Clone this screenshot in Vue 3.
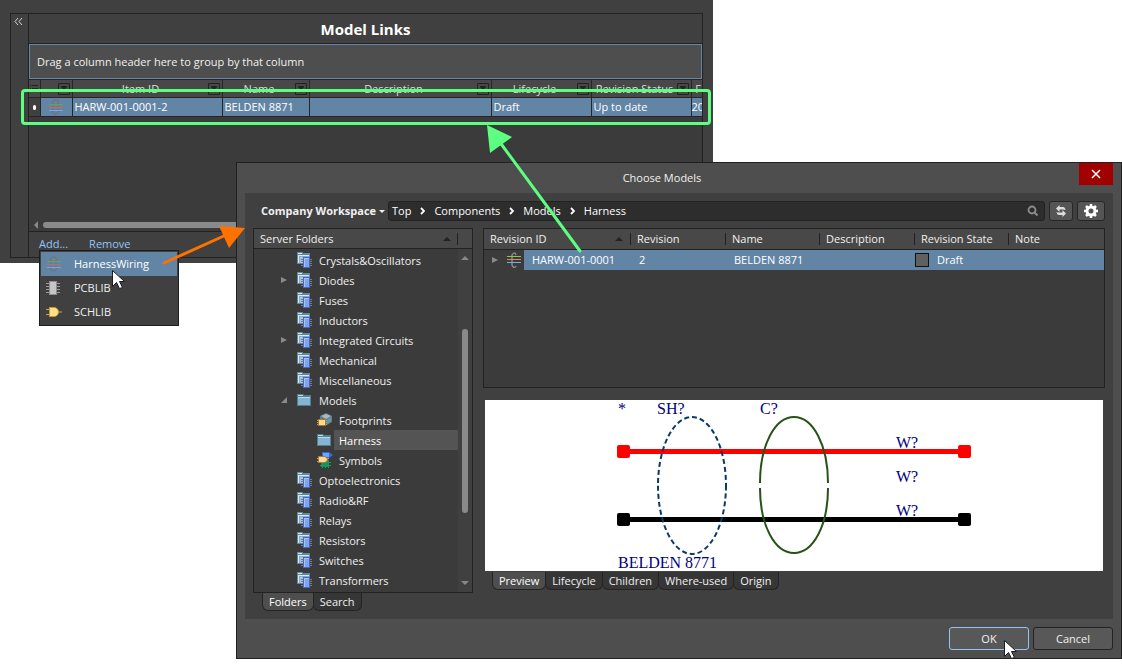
<script setup>
import { ref } from 'vue'

const gridCols = [
  { label: 'Item ID', width: 150, value: 'HARW-001-0001-2' },
  { label: 'Name', width: 87, value: 'BELDEN 8871' },
  { label: 'Description', width: 182, value: '' },
  { label: 'Lifecycle', width: 100, value: 'Draft' },
  { label: 'Revision Status', width: 100, value: 'Up to date' },
]

const menuItems = [
  { label: 'HarnessWiring', icon: 'harness' },
  { label: 'PCBLIB', icon: 'chip' },
  { label: 'SCHLIB', icon: 'gate' },
]

const folders = [
  { name: 'Crystals&Oscillators', icon: 'parts' },
  { name: 'Diodes', icon: 'parts', arrow: 'closed' },
  { name: 'Fuses', icon: 'parts' },
  { name: 'Inductors', icon: 'parts' },
  { name: 'Integrated Circuits', icon: 'parts', arrow: 'closed' },
  { name: 'Mechanical', icon: 'parts' },
  { name: 'Miscellaneous', icon: 'parts' },
  { name: 'Models', icon: 'folder', arrow: 'open' },
  { name: 'Footprints', icon: 'footprint', child: true },
  { name: 'Harness', icon: 'folder', child: true, selected: true },
  { name: 'Symbols', icon: 'symbol', child: true },
  { name: 'Optoelectronics', icon: 'parts' },
  { name: 'Radio&RF', icon: 'parts' },
  { name: 'Relays', icon: 'parts' },
  { name: 'Resistors', icon: 'parts' },
  { name: 'Switches', icon: 'parts' },
  { name: 'Transformers', icon: 'parts' },
]

const crumbs = ['Top', 'Components', 'Models', 'Harness']
const leftTabs = ['Folders', 'Search']
const previewTabs = ['Preview', 'Lifecycle', 'Children', 'Where-used', 'Origin']
const leftTab = ref('Folders')
const previewTab = ref('Preview')
</script>

<template>
  <main class="desktop">
    <svg class="defs" aria-hidden="true">
      <symbol id="i-parts" viewBox="0 0 16 16">
        <path d="M0 0h6v1h7v11H0z" fill="#5f88a3" />
        <path d="M1 1h4v1H1zM1 3h11v1H1zM1 3h1v8H1z" fill="#dcebf2" />
        <path d="M2 4h10v7H2z" fill="#86acc6" />
        <path d="M3 5h8v6H3z" fill="#a9c6da" />
        <path d="M4 7.500h2M4 9.500h2M4 11.500h2M4 13.500h2M13 7.500h2M13 9.500h2M13 11.500h2M13 13.500h2" stroke="#7b7b80" />
        <path d="M6 5h7v11H6z" fill="#4468c8" />
        <path d="M7 6h5v9H7z" fill="#a9c0fb" />
        <path d="M8 7h4v8H8z" fill="#82a4ee" />
      </symbol>
      <symbol id="i-folder" viewBox="0 0 16 16">
        <path d="M0 2h6l1 1h7v11H0z" fill="#4f8193" />
        <path d="M1 3h5v1H1zM1 5h12v1H1z" fill="#b9dbe6" />
        <path d="M1 6h12v7H1z" fill="#86b3d4" />
      </symbol>
      <symbol id="i-footprint" viewBox="0 0 16 16">
        <path d="M3 4l6-3 6 3v6l-5 3-7-3z" fill="#5c7e89" />
        <path d="M4 4l5-2 5 2-5 3z" fill="#a9b6c4" />
        <path d="M10 8l4-3v4l-4 3z" fill="#6e96a2" />
        <path d="M0 8.500h10M0 10.500h10M0 12.500h10" stroke="#c89f55" />
        <path d="M1 7h8v7H1z" fill="#a87930" />
        <path d="M2 8h6v5H2z" fill="#ffd98a" />
      </symbol>
      <symbol id="i-symbol" viewBox="0 0 16 16">
        <path d="M5 0h7l4 3-4 3H5z" fill="#2d6fe0" />
        <path d="M6 1h6v4H6z" fill="#6ba5ff" />
        <path d="M4 9h8v6H4z" fill="#138f5a" />
        <path d="M3 10.500h11M3 13.500h11M5.500 8v8M8.500 8v8M11.500 8v8" stroke="#169a62" />
        <path d="M0 6.500h12M0 9.500h4" stroke="#d5a458" />
        <path d="M1 4h7l3 3v2l-3 2H1z" fill="#aa7c37" />
        <path d="M2 5h6l2 2v1l-2 2H2z" fill="#ffd99a" />
      </symbol>
      <symbol id="i-harness" viewBox="0 0 16 16">
        <path d="M4 4C5 0 10 0 11 4M4 12c1 4 6 4 7 0M5 4v8M10 4v8" fill="none" stroke="#6d7277" stroke-width="1.500" stroke-dasharray="2 1" />
        <path d="M1 5.500h14" stroke="#65a743" />
        <path d="M1 8.500h14" stroke="#df5c62" />
        <path d="M1 11.500h14" stroke="#6da9ea" />
      </symbol>
      <symbol id="i-harness2" viewBox="0 0 16 16">
        <path d="M10 3C9 0 7 1 6 3v10c1 3 3 3 4 1" fill="none" stroke="#888" stroke-width="1.500" />
        <path d="M1 4.500h14" stroke="#79d43c" />
        <path d="M1 7.500h14" stroke="#ed7774" />
        <path d="M1 10.500h14" stroke="#77acec" />
      </symbol>
      <symbol id="i-chip" viewBox="0 0 16 16">
        <path d="M0 3.500h14M0 6.500h14M0 9.500h14M0 12.500h14" stroke="#9a9a9a" />
        <path d="M3 1h8v14H3z" fill="#8f8f8f" />
        <path d="M4 2h6v12H4z" fill="#c6c6c6" />
      </symbol>
      <symbol id="i-gate" viewBox="0 0 16 16">
        <path d="M0 5.500h4M0 10.500h4M11 8h5" stroke="#c9a955" />
        <path d="M3 3h6q4 2 4 5t-4 5H3z" fill="#c39a37" />
        <path d="M4 4h5q3 1 3 4t-3 4H4z" fill="#ffdf86" />
      </symbol>
    </svg>

    <section class="links-window" aria-label="Model Links">
      <div class="links-panel">
        <button class="collapse" aria-label="Collapse">
          <svg width="9" height="9" viewBox="0 0 9 9"><path d="M4 1L1 4.500l3 3.500M8 1L5 4.500l3 3.500" fill="none" stroke="#d4d4d4" /></svg>
        </button>
        <div class="links-body">
          <h1>Model Links</h1>
          <p class="group-box">Drag a column header here to group by that column</p>
          <div class="grid-clip">
            <table class="grid">
              <colgroup>
                <col class="c-mark"><col class="c-icon">
                <col v-for="c in gridCols" :key="c.label" :style="{ width: c.width + 'px' }">
                <col>
              </colgroup>
              <thead>
                <tr>
                  <th><svg width="8" height="10" viewBox="0 0 8 10"><path d="M0 1.500h1M2 1.500h6M0 4.500h1M2 4.500h6M0 7.500h1M2 7.500h6" stroke="#222" /></svg></th>
                  <th><svg class="filter" width="12" height="12" viewBox="0 0 12 12"><path d="M.5.5h11v11H.5z" fill="none" stroke="#222" /><path d="M3 3h6v1L7 6v3H5V6L3 4z" fill="#222" /></svg></th>
                  <th v-for="c in gridCols" :key="c.label">
                    <span class="th-in"><span class="th-text">{{ c.label }}</span><svg class="filter" width="12" height="12" viewBox="0 0 12 12"><path d="M.5.5h11v11H.5z" fill="none" stroke="#222" /><path d="M3 3h6v1L7 6v3H5V6L3 4z" fill="#222" /></svg></span>
                  </th>
                  <th class="last">F</th>
                </tr>
              </thead>
              <tbody>
                <tr>
                  <td class="mark"><i class="dot"></i></td>
                  <td class="icon-cell"><svg width="16" height="16"><use href="#i-harness" /></svg></td>
                  <td v-for="c in gridCols" :key="c.label">{{ c.value }}</td>
                  <td class="last">20</td>
                </tr>
              </tbody>
            </table>
          </div>
          <div class="h-scroll"><i class="tri-left"></i><i class="h-thumb"></i></div>
          <footer class="links-actions">
            <a href="#add">Add...</a>
            <a href="#remove">Remove</a>
          </footer>
        </div>
      </div>
      <div class="highlight"></div>
    </section>

    <div class="menu" role="menu">
      <button v-for="(m, n) in menuItems" :key="m.label" role="menuitem" :class="{ active: n === 0 }">
        <svg width="16" height="16"><use :href="'#i-' + m.icon" /></svg>{{ m.label }}
      </button>
    </div>

    <section class="dialog" role="dialog" aria-label="Choose Models">
      <header class="dialog-title">
        <h2>Choose Models</h2>
        <button class="close" aria-label="Close">
          <svg width="10" height="10" viewBox="0 0 10 10"><path d="M1 1l8 8M9 1L1 9" stroke="#fff" stroke-width="1.500" /></svg>
        </button>
      </header>

      <div class="content">
        <div class="toolbar">
          <button class="workspace">Company Workspace<i class="caret"></i></button>
          <nav class="path">
            <template v-for="(c, n) in crumbs" :key="c">
              <svg v-if="n" class="chev" width="5" height="8" viewBox="0 0 5 8"><path d="M1 1l3 3-3 3" fill="none" stroke="#fff" stroke-width="1.800" /></svg>
              <a href="#path">{{ c }}</a>
            </template>
            <svg class="lens" width="12" height="12" viewBox="0 0 12 12"><circle cx="5" cy="5" r="3.500" fill="none" stroke="#8c8c8c" stroke-width="1.800" /><path d="M7.500 7.500l3 3" stroke="#8c8c8c" stroke-width="2" /></svg>
          </nav>
          <button class="tool refresh" aria-label="Refresh">
            <svg width="12" height="12" viewBox="0 0 12 12"><path d="M1 3.500L4.500 0v2H8q2 0 2.500 3Q9.500 4.500 8 4.500H4.500V7zM11 8.500L7.500 12v-2H4Q2 10 1.500 7 2.500 7.500 4 7.500h3.500V5z" fill="#ddd" /></svg>
          </button>
          <button class="tool settings" aria-label="Settings">
            <svg width="14" height="14" viewBox="0 0 14 14"><circle cx="7" cy="7" r="4" fill="none" stroke="#fff" stroke-width="3" /><path d="M7 0v3M7 11v3M0 7h3M11 7h3M2 2l2 2M10 10l2 2M12 2l-2 2M4 10l-2 2" stroke="#fff" stroke-width="2.500" /></svg>
          </button>
        </div>

        <div class="columns">
          <div class="left">
            <div class="tree-box">
              <div class="tree-head"><span>Server Folders</span><i class="sort"></i></div>
              <div class="tree-main">
                <ul class="tree" role="tree">
                  <li v-for="f in folders" :key="f.name" role="treeitem" :class="{ child: f.child, selected: f.selected }">
                    <i class="arrow" :class="f.arrow"></i>
                    <svg width="16" height="16"><use :href="'#i-' + f.icon" /></svg>
                    <span class="folder-name">{{ f.name }}</span>
                  </li>
                </ul>
                <div class="v-scroll"><i class="tri-up"></i><i class="v-thumb"></i><i class="tri-down"></i></div>
              </div>
            </div>
            <div class="tabs" role="tablist">
              <button v-for="t in leftTabs" :key="t" role="tab" :class="{ on: t === leftTab }" @click="leftTab = t">{{ t }}</button>
            </div>
          </div>

          <div class="right">
            <div class="revisions">
              <table>
                <colgroup><col class="r-id"><col class="r-rev"><col class="r-name"><col class="r-desc"><col class="r-state"><col></colgroup>
                <thead>
                  <tr><th><span class="sorted">Revision ID<i class="sort"></i></span></th><th>Revision</th><th>Name</th><th>Description</th><th>Revision State</th><th>Note</th></tr>
                </thead>
                <tbody>
                  <tr>
                    <td class="first"><span class="id-cell"><i class="arrow closed"></i><svg width="16" height="16"><use href="#i-harness2" /></svg><span class="id-text">HARW-001-0001</span></span></td>
                    <td>2</td><td>BELDEN 8871</td><td></td>
                    <td class="state"><span><i class="swatch"></i>Draft</span></td><td></td>
                  </tr>
                </tbody>
              </table>
            </div>
            <div class="preview">
              <svg viewBox="0 0 618 171" width="618" height="171">
                <path d="M138 51.500h341" stroke="#f00" stroke-width="5" />
                <path d="M138 119.500h341" stroke="#000" stroke-width="5" />
                <g fill="#f00"><rect x="132" y="45" width="13" height="13" rx="2" /><rect x="473" y="45" width="13" height="13" rx="2" /></g>
                <rect x="132" y="113" width="13" height="13" rx="2" /><rect x="473" y="113" width="13" height="13" rx="2" />
                <ellipse cx="207" cy="85.500" rx="34" ry="68.500" fill="none" stroke="#0b3a66" stroke-width="2" stroke-dasharray="5 3" />
                <path d="M275 83C275 45 290 17 309 17S343 45 343 83M275 88C275 126 290 153 309 153S343 126 343 88" fill="none" stroke="#275218" stroke-width="2" />
                <g class="labels">
                  <text x="133" y="14">*</text><text x="172" y="14">SH?</text><text x="275" y="14">C?</text>
                  <text x="411" y="48">W?</text><text x="411" y="82">W?</text><text x="411" y="116">W?</text>
                  <text x="133" y="168">BELDEN 8771</text>
                </g>
              </svg>
            </div>
            <div class="tabs" role="tablist">
              <button v-for="t in previewTabs" :key="t" role="tab" :class="{ on: t === previewTab }" @click="previewTab = t">{{ t }}</button>
            </div>
          </div>
        </div>
      </div>

      <footer class="dialog-actions">
        <button class="ok">OK</button>
        <button>Cancel</button>
      </footer>
    </section>

    <svg class="overlay" width="1122" height="672" viewBox="0 0 1122 672" aria-hidden="true">
      <path d="M580 251L499 141" stroke="#5cff80" stroke-width="3" stroke-linecap="round" />
      <path d="M487 125l25 12-22 16z" fill="#5cff80" />
      <path d="M164 263l62-28" stroke="#ff7200" stroke-width="3" stroke-linecap="round" />
      <path d="M245 228l-26-2 10 22z" fill="#ff7200" />
      <g fill="#fff" stroke="#1c1c28">
        <path d="M112.500 270.500v16l4-4 3 6 3-1-3-6h5z" />
        <path d="M1004.500 640.500v16l4-4 3 6 3-1-3-6h5z" />
      </g>
    </svg>
  </main>
</template>

<style>
body { background: #fff; }
</style>

<style scoped>
* { box-sizing: border-box; }
.desktop { position: relative; min-height: 100vh; overflow: hidden; font: 11px/16px "Open Sans", "Noto Sans", sans-serif; color: #f0f0f0; }
button { font: inherit; color: inherit; border: 0; padding: 0; background: none; }
a { color: inherit; text-decoration: none; }
h1, h2, p, ul { margin: 0; padding: 0; }
i { display: block; flex: none; }
svg { flex: none; }
.defs { position: absolute; width: 0; height: 0; }
table { border-collapse: collapse; table-layout: fixed; }
th { font-weight: 400; }

.links-window { position: absolute; left: 0; top: 0; right: 409px; height: 263px; display: flex; padding: 13px 10px 5px; background: #404040; }
.links-panel { flex: 1; min-width: 0; display: flex; border: 1px solid #222; }
.collapse { width: 18px; display: flex; justify-content: center; padding: 3px 2px 0 0; border-right: 1px solid #222; }
.links-body { flex: 1; min-width: 0; display: flex; flex-direction: column; }
h1 { height: 30px; font-size: 15px; line-height: 30px; font-weight: 700; text-align: center; color: #fff; border-bottom: 1px solid #222; }
.group-box { height: 35px; padding: 0 7px; line-height: 34px; border: 1px solid #6586a8; background: #4e4e4e; }
.grid-clip { flex: 1; overflow: hidden; background: #3b3b3b; }
.grid { width: 100%; }
.c-mark { width: 11px; }
.c-icon { width: 32px; }
.grid th, .grid td { border: 1px solid #262626; padding: 0 2px; height: 18px; line-height: 16px; white-space: nowrap; }
.grid td { height: 19px; }
.grid th { background: #484848; padding: 0 1px; text-align: center; vertical-align: middle; color: #ddd; }
.grid th svg { display: block; margin: auto; }
.grid th svg.filter { margin-right: 1px; }
.grid th.last { text-align: right; }
.grid td.last { padding: 0; }
.grid tr > :first-child { border-left: 0; }
.grid tr > :last-child { border-right: 0; }
.th-in { display: flex; align-items: center; }
.th-text { flex: 1; }
.grid td { background: #6385a5; color: #fff; }
.grid td.mark { background: #404040; }
.grid td.icon-cell svg { display: block; margin: 0 auto; }
.dot { width: 3px; height: 5px; border-radius: 2px; margin: auto; background: #fff; }
.h-scroll { display: flex; align-items: center; gap: 5px; height: 14px; padding-left: 5px; background: #3b3b3b; border-bottom: 1px solid #222; }
.tri-left { border: 4px solid transparent; border-left: 0; border-right-color: #888; }
.h-thumb { flex: 1; height: 6px; border-radius: 3px; background: #8a8a8a; }
.links-actions { display: flex; gap: 21px; height: 25px; padding-left: 10px; line-height: 24px; color: #8fc6ff; }
.highlight { position: absolute; left: 21px; right: 2px; top: 89px; height: 36px; border: 3px solid #5cff80; border-radius: 4px; }

.menu { position: absolute; left: 39px; top: 250px; width: 140px; padding: 1px; display: flex; flex-direction: column; background: #404040; border: 1px solid #1e1e1e; }
.menu button { display: flex; align-items: center; gap: 12px; height: 24px; padding-left: 5px; }
.menu button.active { background: #6385a5; color: #fff; }

.dialog { position: absolute; left: 236px; right: 0; top: 162px; height: 497px; display: flex; flex-direction: column; border: 1px solid #202020; background: #4e4e4e; padding: 0 8px 8px; }
.dialog-title { position: relative; height: 30px; }
h2 { font-size: 11px; line-height: 30px; font-weight: 400; text-align: center; padding-right: 34px; }
.close { position: absolute; right: 0; top: 0; width: 34px; height: 22px; display: grid; place-items: center; background: #a00000; }
.content { flex: 1; min-height: 0; display: flex; flex-direction: column; padding: 8px; background: #404040; }
.toolbar { display: flex; align-items: center; height: 20px; padding-left: 8px; }
.workspace { display: flex; align-items: center; width: 127px; font-weight: 700; white-space: nowrap; }
.caret { margin-left: 3px; border: 3px solid transparent; border-top-color: #eee; border-bottom: 0; }
.path { flex: 1; display: flex; align-items: center; height: 20px; padding: 0 5px 0 3px; background: #2d2d2d; border: 1px solid #222; border-radius: 3px; color: #fff; }
.chev { margin: 0 9px; }
.lens { margin-left: auto; }
.tool { display: grid; place-items: center; height: 20px; background: #555; border: 1px solid #262626; border-radius: 3px; }
.refresh { width: 24px; margin-left: 4px; }
.settings { width: 28px; margin-left: 4px; }
.columns { flex: 1; min-height: 0; display: flex; gap: 10px; padding-top: 7px; }
.left { width: 220px; display: flex; flex-direction: column; }
.tree-box { border: 1px solid #222; background: #3b3b3b; }
.tree-head { height: 20px; display: flex; align-items: center; padding: 0 14px 0 6px; background: #484848; border-bottom: 1px solid #222; }
.sort { margin-left: auto; border: 4px solid transparent; border-top: 0; border-bottom-color: #222; }
.tree-head .sort { margin-right: 6px; }
.tree-head::after { content: ""; width: 1px; height: 12px; background: #222; }
.tree-main { display: flex; }
.tree { flex: 1; padding: 1px 0 2px; list-style: none; }
.tree li { display: flex; align-items: center; height: 20px; padding-left: 27px; }
.tree li.child { padding-left: 47px; }
.arrow { width: 7px; margin-right: 9px; }
.arrow.closed::before { content: ""; display: block; width: 0; border: 3px solid transparent; border-left: 6px solid #8a8a8a; border-right: 0; }
.arrow.open::before { content: ""; display: block; width: 0; border-left: 6px solid transparent; border-bottom: 6px solid #8a8a8a; }
.folder-name { flex: 1; height: 20px; padding-left: 5px; margin-left: 1px; line-height: 22px; }
.selected .folder-name { background: #545454; color: #fff; }
.v-scroll { width: 14px; display: flex; flex-direction: column; align-items: center; padding: 7px 0; background: #404040; }
.tri-up { border: 4px solid transparent; border-top: 0; border-bottom-color: #888; }
.tri-down { margin-top: auto; border: 4px solid transparent; border-bottom: 0; border-top-color: #888; }
.v-thumb { width: 6px; height: 184px; margin-top: 69px; border-radius: 3px; background: #8a8a8a; }
.tabs { display: flex; padding-left: 9px; }
.tabs button { height: 18px; padding: 0 6px; line-height: 16px; background: #363636; border: 1px solid #242424; border-top: 0; border-radius: 0 0 6px 6px; }
.tabs button + button { margin-left: -1px; }
.tabs button.on { background: #4e4e4e; color: #fff; }
.right { flex: 1; min-width: 0; display: flex; flex-direction: column; }
.revisions { height: 160px; border: 1px solid #222; background: #3b3b3b; }
.revisions table { width: 100%; }
.r-id { width: 147px; }
.r-rev { width: 95px; }
.r-name { width: 94px; }
.r-desc { width: 95px; }
.r-state { width: 94px; }
.revisions th { height: 20px; padding: 0 0 0 6px; text-align: left; white-space: nowrap; background: linear-gradient(#222, #222) right 4px / 1px 12px no-repeat #484848; border-bottom: 1px solid #222; }
.revisions th:last-child { background: #484848; }
.sorted { display: flex; align-items: center; padding-right: 8px; }
.revisions td { height: 20px; padding: 0 0 0 8px; background: #6385a5; color: #fff; white-space: nowrap; }
.revisions td.first { padding: 0; background: #3b3b3b; }
.id-cell { display: flex; align-items: center; padding-left: 8px; }
.id-cell .arrow { margin-right: 7px; }
.id-text { flex: 1; height: 20px; line-height: 20px; margin-left: 2px; padding-left: 8px; background: #6385a5; }
.revisions td.state { padding-left: 0; }
.state span { display: flex; align-items: center; gap: 8px; }
.swatch { width: 14px; height: 14px; background: #606060; border: 1px solid #111; }
.preview { margin: 12px 2px 0; background: #fff; overflow: hidden; }
.preview svg { display: block; }
.labels { font: 16px "Liberation Serif", serif; fill: #000080; }
.right .tabs { padding-top: 1px; }
.dialog-actions { display: flex; justify-content: flex-end; gap: 4px; padding-top: 8px; }
.dialog-actions button { width: 80px; height: 23px; background: #585858; border: 1px solid #222; border-radius: 3px; }
.dialog-actions button.ok { border-color: #91c5f5; }
.overlay { position: absolute; left: 0; top: 0; pointer-events: none; }
</style>
